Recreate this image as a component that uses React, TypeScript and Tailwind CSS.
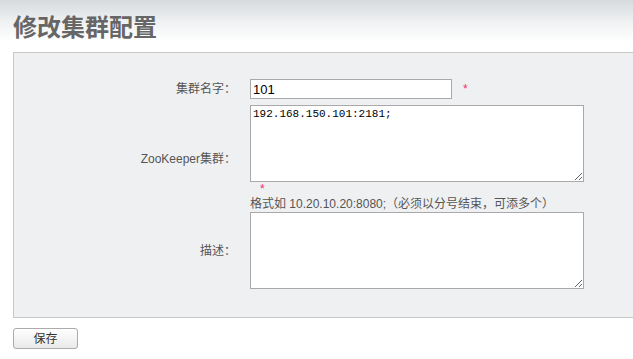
import { useState } from 'react';

const font = { fontFamily: '"Liberation Sans", "Noto Sans CJK SC", sans-serif' };

export default function App() {
  const [name, setName] = useState('101');
  const [zk, setZk] = useState('192.168.150.101:2181;');
  const [desc, setDesc] = useState('');

  return (
    <div className="min-h-[359px] bg-white text-[12px] text-[#555]" style={font}>
      <div className="h-[52px] flex items-center pl-[13px] bg-[linear-gradient(to_bottom,#d6dadd_0%,#eef0f1_40%,#ffffff_80%)]">
        <h1
          className="text-[24px] font-bold text-[#666] leading-none tracking-[0px]"
          style={{ fontFamily: '"Noto Sans CJK SC", sans-serif' }}
        >
          修改集群配置
        </h1>
      </div>

      <div className="ml-[13px] border-t border-b border-l border-[#c8c8c8] bg-[#eff0f2] pt-[26px] pb-[28px]">
        <div className="grid grid-cols-[222px_1fr] gap-x-[14px]">
          {/* name */}
          <div className="flex items-center justify-end">集群名字：</div>
          <div className="flex items-center">
            <input
              value={name}
              onChange={(e) => setName(e.target.value)}
              className="w-[202px] h-[20px] border border-[#a9a9a9] bg-white px-[2px] text-[13px] text-black outline-none"
              style={font}
            />
            <span className="ml-[11px] text-[12px] text-[#f0306a]">*</span>
          </div>

          {/* zookeeper */}
          <div className="flex items-center justify-end mt-[6px]">ZooKeeper集群：</div>
          <div className="mt-[6px]">
            <textarea
              value={zk}
              onChange={(e) => setZk(e.target.value)}
              className="block w-[334px] h-[77px] border border-[#a9a9a9] bg-white px-[2px] py-[1px] text-[11px] leading-[15px] text-black outline-none"
              style={{ fontFamily: '"Liberation Mono", monospace' }}
            />
            <div className="h-[14px] leading-[14px] pl-[10px] text-[#f0306a]">*</div>
            <div className="h-[16px] leading-[16px]">格式如 10.20.10.20:8080;（必须以分号结束，可添多个）</div>
          </div>

          {/* desc */}
          <div className="flex items-center justify-end">描述：</div>
          <div>
            <textarea
              value={desc}
              onChange={(e) => setDesc(e.target.value)}
              className="block w-[334px] h-[77px] border border-[#a9a9a9] bg-white px-[2px] py-[1px] text-[12px] text-black outline-none"
            />
          </div>
        </div>
      </div>

      <div className="pl-[13px] pt-[10px]">
        <button className="w-[65px] h-[21px] border border-[#ababab] rounded-[3px] bg-[linear-gradient(to_bottom,#ffffff,#e9e9e9)] text-[12px] text-[#333] leading-none">
          保存
        </button>
      </div>
    </div>
  );
}
